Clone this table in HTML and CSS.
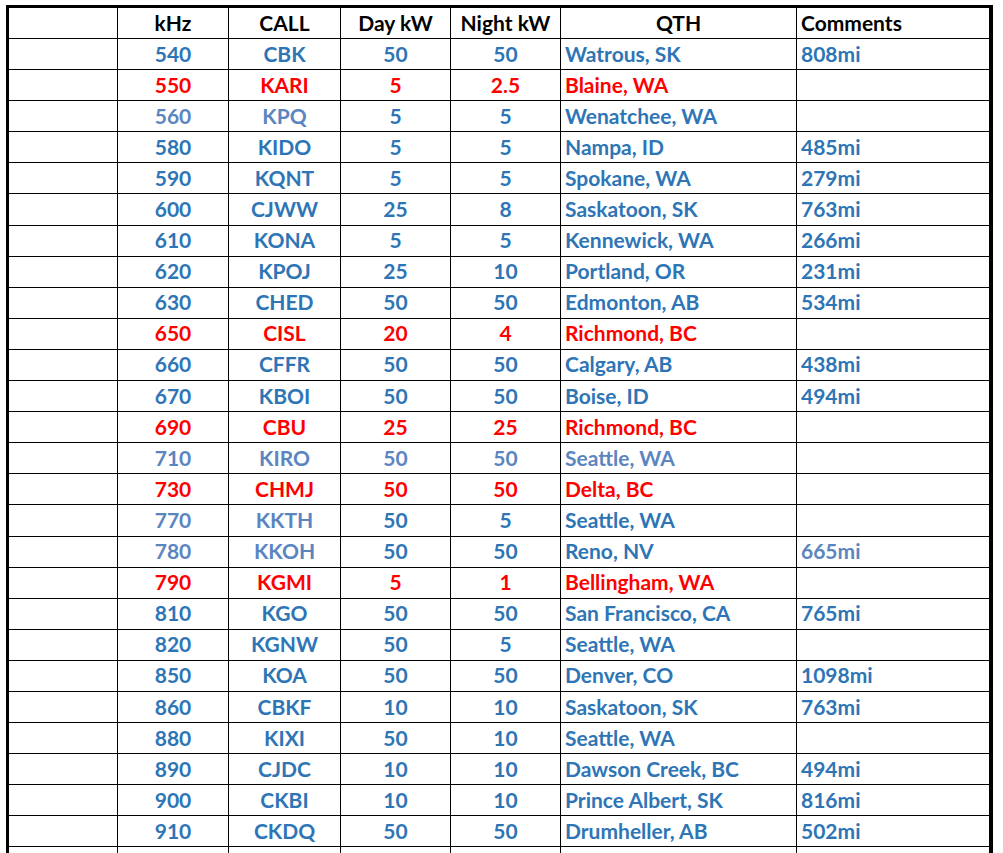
FILE: index.html
```html
<!DOCTYPE html>
<html lang="en">
<head>
<meta charset="utf-8">
<title>AM Stations</title>
<link rel="stylesheet" href="styles.css">
</head>
<body>
<div class="sheet">
<table class="grid">
<thead>
<tr class="head">
<th class="c1"></th><th class="c2">kHz</th><th class="c3">CALL</th><th class="c4">Day kW</th><th class="c5">Night kW</th><th class="c6">QTH</th><th class="c7 left">Comments</th>
</tr>
</thead>
<tbody>
<tr class="b"><td></td><td>540</td><td>CBK</td><td>50</td><td>50</td><td class="left">Watrous, SK</td><td class="left">808mi</td></tr>
<tr class="r"><td></td><td>550</td><td>KARI</td><td>5</td><td>2.5</td><td class="left">Blaine, WA</td><td class="left"></td></tr>
<tr class="b"><td></td><td class="lb">560</td><td class="lb">KPQ</td><td>5</td><td>5</td><td class="left">Wenatchee, WA</td><td class="left"></td></tr>
<tr class="b"><td></td><td>580</td><td>KIDO</td><td>5</td><td>5</td><td class="left">Nampa, ID</td><td class="left">485mi</td></tr>
<tr class="b"><td></td><td>590</td><td>KQNT</td><td>5</td><td>5</td><td class="left">Spokane, WA</td><td class="left">279mi</td></tr>
<tr class="b"><td></td><td>600</td><td>CJWW</td><td>25</td><td>8</td><td class="left">Saskatoon, SK</td><td class="left">763mi</td></tr>
<tr class="b"><td></td><td>610</td><td>KONA</td><td>5</td><td>5</td><td class="left">Kennewick, WA</td><td class="left">266mi</td></tr>
<tr class="b"><td></td><td>620</td><td>KPOJ</td><td>25</td><td>10</td><td class="left">Portland, OR</td><td class="left">231mi</td></tr>
<tr class="b"><td></td><td>630</td><td>CHED</td><td>50</td><td>50</td><td class="left">Edmonton, AB</td><td class="left">534mi</td></tr>
<tr class="r"><td></td><td>650</td><td>CISL</td><td>20</td><td>4</td><td class="left">Richmond, BC</td><td class="left"></td></tr>
<tr class="b"><td></td><td>660</td><td>CFFR</td><td>50</td><td>50</td><td class="left">Calgary, AB</td><td class="left">438mi</td></tr>
<tr class="b"><td></td><td>670</td><td>KBOI</td><td>50</td><td>50</td><td class="left">Boise, ID</td><td class="left">494mi</td></tr>
<tr class="r"><td></td><td>690</td><td>CBU</td><td>25</td><td>25</td><td class="left">Richmond, BC</td><td class="left"></td></tr>
<tr class="l"><td></td><td>710</td><td>KIRO</td><td>50</td><td>50</td><td class="left">Seattle, WA</td><td class="left"></td></tr>
<tr class="r"><td></td><td>730</td><td>CHMJ</td><td>50</td><td>50</td><td class="left">Delta, BC</td><td class="left"></td></tr>
<tr class="b"><td></td><td class="lb">770</td><td class="lb">KKTH</td><td>50</td><td>5</td><td class="left">Seattle, WA</td><td class="left"></td></tr>
<tr class="b"><td></td><td class="lb">780</td><td class="lb">KKOH</td><td>50</td><td>50</td><td class="left">Reno, NV</td><td class="left lb">665mi</td></tr>
<tr class="r"><td></td><td>790</td><td>KGMI</td><td>5</td><td>1</td><td class="left">Bellingham, WA</td><td class="left"></td></tr>
<tr class="b"><td></td><td>810</td><td>KGO</td><td>50</td><td>50</td><td class="left">San Francisco, CA</td><td class="left">765mi</td></tr>
<tr class="b"><td></td><td>820</td><td>KGNW</td><td>50</td><td>5</td><td class="left">Seattle, WA</td><td class="left"></td></tr>
<tr class="b"><td></td><td>850</td><td>KOA</td><td>50</td><td>50</td><td class="left">Denver, CO</td><td class="left">1098mi</td></tr>
<tr class="b"><td></td><td>860</td><td>CBKF</td><td>10</td><td>10</td><td class="left">Saskatoon, SK</td><td class="left">763mi</td></tr>
<tr class="b"><td></td><td>880</td><td>KIXI</td><td>50</td><td>10</td><td class="left">Seattle, WA</td><td class="left"></td></tr>
<tr class="b"><td></td><td>890</td><td>CJDC</td><td>10</td><td>10</td><td class="left">Dawson Creek, BC</td><td class="left">494mi</td></tr>
<tr class="b"><td></td><td>900</td><td>CKBI</td><td>10</td><td>10</td><td class="left">Prince Albert, SK</td><td class="left">816mi</td></tr>
<tr class="b"><td></td><td>910</td><td>CKDQ</td><td>50</td><td>50</td><td class="left">Drumheller, AB</td><td class="left">502mi</td></tr>
<tr class="b"><td></td><td></td><td></td><td></td><td></td><td class="left"></td><td class="left"></td></tr>
</tbody>
</table>
</div>
</body>
</html>
```
FILE: styles.css
```css
html, body {
  margin: 0;
  padding: 0;
  background: #ffffff;
}
body {
  font-family: Lato, "Open Sans", "Liberation Sans", sans-serif;
  font-weight: 700;
  font-size: 21px;
  overflow: hidden;
  height: 853px;
}
.sheet {
  margin: 5px 0 0 6px;
  width: 980px;
  border-top: 3px solid #000;
  border-left: 3px solid #000;
  border-right: 4px solid #000;
}
.grid {
  border-collapse: separate;
  border-spacing: 0;
  table-layout: fixed;
  width: 980px;
}
.grid th,
.grid td {
  box-sizing: border-box;
  border-right: 1px solid #000;
  border-bottom: 1px solid #000;
  padding: 0 4px 2px 4px;
  text-align: center;
  vertical-align: middle;
  white-space: nowrap;
  overflow: hidden;
  line-height: 21px;
}
.grid th:last-child,
.grid td:last-child {
  border-right: none;
}
.grid th {
  color: #000;
  font-weight: 700;
}
.c1 { width: 109px; }
.c2 { width: 111px; }
.c3 { width: 112px; }
.c4 { width: 110px; }
.c5 { width: 110px; }
.c6 { width: 236px; }
.c7 { width: 192px; }
.head { height: 31px; }
tbody tr { height: 31.1px; }
.grid .left { text-align: left; }
.b td { color: #2e75b6; }
.r td { color: #ff0000; }
.l td { color: #5b85c0; }
.grid td.lb { color: #5b85c0; }
```
